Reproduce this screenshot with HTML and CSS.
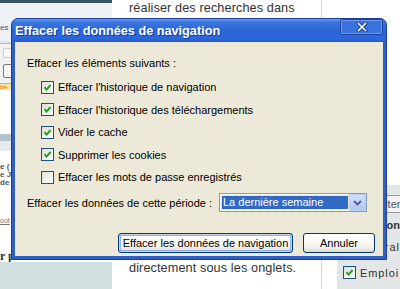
FILE: index.html
```html
<!DOCTYPE html>
<html lang="fr">
<head>
    <meta charset="UTF-8">
    <meta name="viewport" content="width=device-width, initial-scale=1.0">
    <title>Effacer les données de navigation</title>
    <link rel="stylesheet" href="styles.css">
</head>
<body>
    <!-- Page behind the dialog -->
    <div class="page">
        <div class="col-left">
            <div class="lc-bar"></div>
            <div class="lc-head"><span class="lc-tiny">es</span></div>
            <div class="lc-box">
                <span class="lc-sq lc-sq-top"></span>
                <span class="lc-sq"></span>
            </div>
            <div class="lc-warn">tre</div>
            <div class="lc-gap"></div>
            <div class="lc-band"></div>
            <div class="lc-sub"></div>
            <div class="lc-list">e (<br>e J<br>de</div>
            <a class="lc-link" href="#">out</a>
            <div class="lc-bold">r p</div>
            <div class="lc-foot"></div>
        </div>
        <div class="col-mid">
            <p class="txt">réaliser des recherches dans</p>
            <p class="txt txt-bottom">directement sous les onglets.</p>
        </div>
        <div class="divider"></div>
        <div class="col-right">
            <div class="rc-panel">
                <div class="rc-btn">Filter</div>
                <div class="rc-head">Notification</div>
                <div class="rc-row">Général</div>
                <div class="rc-check">
                    <span class="cb">
                        <svg viewBox="0 0 11 11" width="11" height="11"><path d="M2.5 5.2 L4.6 7.6 L8.6 3" fill="none" stroke="#21a121" stroke-width="2"/></svg>
                    </span>
                    Emploi
                </div>
            </div>
        </div>
    </div>

    <!-- Dialog -->
    <div class="dialog">
        <div class="dlg-title">
            <span class="dlg-caption">Effacer les données de navigation</span>
            <span class="dlg-close">
                <svg viewBox="0 0 12 10" width="12" height="10">
                    <path d="M2.5 1.5 L9.5 8.5 M9.5 1.5 L2.5 8.5" stroke="#1b3c8c" stroke-width="3.4" stroke-linecap="square"/>
                    <path d="M2.5 1.5 L9.5 8.5 M9.5 1.5 L2.5 8.5" stroke="#fff" stroke-width="1.6" stroke-linecap="square"/>
                </svg>
            </span>
        </div>
        <div class="dlg-body">
            <div class="group-label">Effacer les éléments suivants :</div>
            <div class="opts">
                <label class="opt"><span class="cb"><svg viewBox="0 0 11 11" width="11" height="11"><path d="M2.5 5.2 L4.6 7.6 L8.6 3" fill="none" stroke="#21a121" stroke-width="2"/></svg></span>Effacer l'historique de navigation</label>
                <label class="opt"><span class="cb"><svg viewBox="0 0 11 11" width="11" height="11"><path d="M2.5 5.2 L4.6 7.6 L8.6 3" fill="none" stroke="#21a121" stroke-width="2"/></svg></span>Effacer l'historique des téléchargements</label>
                <label class="opt"><span class="cb"><svg viewBox="0 0 11 11" width="11" height="11"><path d="M2.5 5.2 L4.6 7.6 L8.6 3" fill="none" stroke="#21a121" stroke-width="2"/></svg></span>Vider le cache</label>
                <label class="opt"><span class="cb"><svg viewBox="0 0 11 11" width="11" height="11"><path d="M2.5 5.2 L4.6 7.6 L8.6 3" fill="none" stroke="#21a121" stroke-width="2"/></svg></span>Supprimer les cookies</label>
                <label class="opt"><span class="cb"></span>Effacer les mots de passe enregistrés</label>
            </div>
            <div class="period">
                <span class="period-label">Effacer les données de cette période :</span>
                <div class="select">
                    <span class="sel-val">La dernière semaine</span>
                    <span class="sel-btn">
                        <svg viewBox="0 0 9 6" width="9" height="6"><path d="M1 1 L4.5 4.5 L8 1" fill="none" stroke="#4d6185" stroke-width="1.8"/></svg>
                    </span>
                </div>
            </div>
            <div class="dlg-buttons">
                <button type="button" class="btn btn-default">Effacer les données de navigation</button>
                <button type="button" class="btn btn-cancel">Annuler</button>
            </div>
        </div>
    </div>
</body>
</html>
```

FILE: styles.css
```css
body {
    margin: 0;
    width: 400px;
    height: 289px;
    overflow: hidden;
    position: relative;
    background: #fff;
    font-family: Arial, "Liberation Sans", sans-serif;
}

/* page behind */
.page {
    display: grid;
    grid-template-columns: 112px 209px 1px 78px;
    height: 289px;
}

.col-left {
    display: flex;
    flex-direction: column;
    overflow: hidden;
}

.lc-bar {
    height: 3px;
    background: #34545f;
}

.lc-head {
    height: 38px;
    background: #eef2f4;
    border-bottom: 2px solid #e2e6e8;
}

.lc-tiny {
    display: block;
    padding-top: 20px;
    font-size: 8px;
    line-height: 10px;
    color: #556;
}

.lc-box {
    height: 35px;
    background: #f1f1f1;
    border-top: 1px solid #e3a4a4;
    border-bottom: 1px solid #e3a4a4;
    padding: 4px 0 0 3px;
}

.lc-sq {
    display: block;
    width: 12px;
    height: 12px;
    border: 1px solid #777;
    border-radius: 2px;
    background: #f8f8f8;
    margin-top: 6px;
}

.lc-sq-top {
    border-color: #ccc;
    height: 8px;
    margin-top: 0;
}

.lc-warn {
    height: 6px;
    background: #f6e49c;
    font-size: 6px;
    line-height: 6px;
    color: #d27000;
}

.lc-gap {
    height: 44px;
}

.lc-band {
    height: 7px;
    background: #b4c3cb;
}

.lc-sub {
    height: 10px;
    background: #e6ebed;
}

.lc-list {
    padding-top: 12px;
    font-size: 8px;
    line-height: 8px;
    font-weight: bold;
    color: #555;
}

.lc-link {
    display: block;
    margin-top: 30px;
    font-size: 7px;
    color: #777;
}

.lc-bold {
    margin-top: 26px;
    font-family: "Liberation Serif", serif;
    font-weight: bold;
    font-size: 12px;
    line-height: 12px;
    color: #333;
}

.lc-foot {
    flex: 1;
    background: #d3e0e1;
}

.col-mid {
    padding-left: 17px;
}

.txt {
    margin: 0;
    font-size: 12.7px;
    line-height: 16px;
    color: #333;
    letter-spacing: 0.1px;
    white-space: nowrap;
}

.txt-bottom {
    margin-top: 244px;
}

.divider {
    background: #d6d6d6;
}

.col-right {
    padding-left: 15px;
    overflow: hidden;
}

.rc-panel {
    margin-top: 185px;
    height: 104px;
    background: #e3e6e6;
    overflow: hidden;
}

.rc-btn {
    margin: 10px 0 0 38px;
    height: 16px;
    border: 1px solid #999;
    border-right: none;
    background: #f2f2f2;
    font-size: 11px;
    line-height: 16px;
    color: #555;
    text-align: right;
    white-space: nowrap;
}

.rc-head {
    padding-top: 5px;
    font-weight: bold;
    font-size: 11px;
    line-height: 14px;
    color: #333;
    text-align: right;
    white-space: nowrap;
}

.rc-row {
    padding-top: 8px;
    font-size: 11px;
    line-height: 14px;
    color: #333;
    letter-spacing: 1px;
    text-align: right;
    white-space: nowrap;
}

.rc-check {
    display: flex;
    align-items: center;
    gap: 4px;
    padding: 12px 0 0 6px;
    font-size: 11px;
    color: #333;
    letter-spacing: 0.9px;
    white-space: nowrap;
}

/* dialog */
.dialog {
    position: absolute;
    left: 11px;
    top: 18px;
    width: 376px;
    box-sizing: border-box;
    background: #2f5fc6;
    border: 1px solid #1b3f9a;
    border-radius: 7px 7px 0 0;
    padding: 0 3px 3px;
    font-family: Tahoma, "Liberation Sans", sans-serif;
    font-size: 11px;
}

.dlg-title {
    height: 23px;
    margin: 0 -3px;
    padding: 0 3px;
    display: flex;
    align-items: center;
    justify-content: space-between;
    border-radius: 6px 6px 0 0;
    background: linear-gradient(180deg, #6a9cf0 0%, #3a76e0 14%, #2b65d8 50%, #2c66da 85%, #2459ca 100%);
}

.dlg-caption {
    color: #fff;
    font-family: "Liberation Sans", Arial, sans-serif;
    font-weight: bold;
    font-size: 12.7px;
    text-shadow: 1px 1px 0 #123f96;
    padding-top: 1px;
}

.dlg-close {
    align-self: flex-start;
    width: 41px;
    height: 14px;
    display: flex;
    align-items: center;
    justify-content: center;
    border: 1px solid #1d449f;
    border-radius: 2px;
    box-shadow: inset 0 0 0 1px #6f9aea;
    background: #3a72de;
}

.dlg-body {
    background: #ece9d8;
    padding: 14px 8px 3px 12px;
    color: #000;
}

.group-label {
    line-height: 14px;
}

.opts {
    margin-top: 6px;
    padding-left: 14px;
}

.opt {
    display: flex;
    align-items: center;
    gap: 4px;
    height: 22.5px;
}

.cb {
    width: 11px;
    height: 11px;
    flex: none;
    display: flex;
    align-items: center;
    justify-content: center;
    border: 1px solid #1c5180;
    background: linear-gradient(135deg, #dcdcd4 0%, #f4f4f0 60%, #ffffff 100%);
}

.period {
    margin-top: 4.5px;
    display: flex;
    align-items: center;
}

.period-label {
    width: 192px;
}

.select {
    width: 148px;
    height: 19px;
    box-sizing: border-box;
    display: flex;
    align-items: center;
    border: 1px solid #7f9db9;
    background: #fff;
}

.sel-val {
    flex: 1;
    height: 13px;
    margin: 0 1px 0 2px;
    padding-left: 1px;
    line-height: 13px;
    background: #316ac5;
    color: #fff;
    outline: 1px dotted #c8d6ee;
}

.sel-btn {
    width: 17px;
    height: 17px;
    display: flex;
    align-items: center;
    justify-content: center;
    border-radius: 2px;
    background: linear-gradient(180deg, #d4e1fc 0%, #bccffa 60%, #adc3f4 100%);
    box-shadow: inset 0 0 0 1px #b9cdf7;
}

.dlg-buttons {
    margin-top: 21px;
    display: flex;
    justify-content: flex-end;
    gap: 10px;
}

.btn {
    height: 20px;
    padding: 0;
    border: 1px solid #003c74;
    border-radius: 3px;
    background: linear-gradient(180deg, #ffffff 0%, #f5f4ef 70%, #dcd8cc 100%);
    font-family: Tahoma, "Liberation Sans", sans-serif;
    font-size: 11px;
    color: #000;
}

.btn-default {
    width: 175px;
    box-shadow: inset 0 0 0 1px #c2d4f5, inset 0 0 0 2px #8fb0ea;
}

.btn-cancel {
    width: 72px;
}
```
